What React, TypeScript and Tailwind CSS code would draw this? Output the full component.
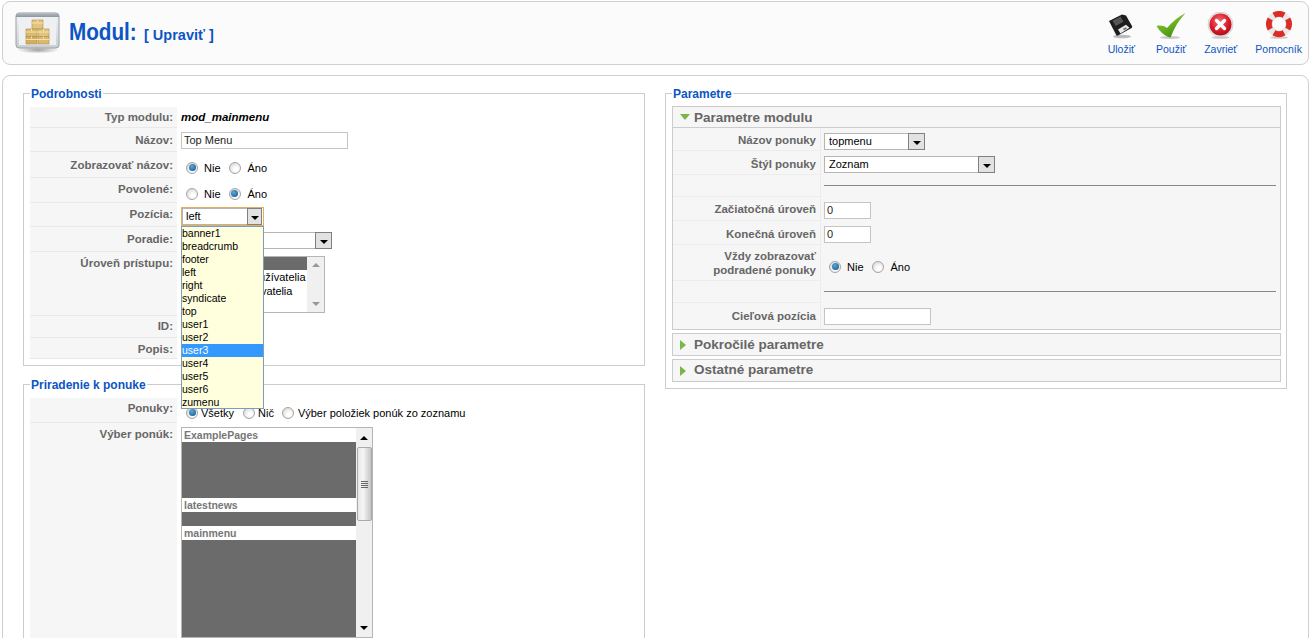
import type { ReactNode } from 'react';

const positions = ['banner1', 'breadcrumb', 'footer', 'left', 'right', 'syndicate', 'top', 'user1', 'user2', 'user3', 'user4', 'user5', 'user6', 'zumenu'];

const ModuleIcon = () => (
  <svg width="46" height="42" viewBox="0 0 46 42">
    <defs>
      <linearGradient id="win" x1="0" y1="0" x2="0" y2="1">
        <stop offset="0" stopColor="#f4f6f8" />
        <stop offset="1" stopColor="#c9ced3" />
      </linearGradient>
      <linearGradient id="winbar" x1="0" y1="0" x2="0" y2="1">
        <stop offset="0" stopColor="#b9bfc6" />
        <stop offset="1" stopColor="#8d949c" />
      </linearGradient>
      <radialGradient id="shade" cx="0.5" cy="0.5" r="0.5">
        <stop offset="0" stopColor="#777" stopOpacity="0.7" />
        <stop offset="1" stopColor="#777" stopOpacity="0" />
      </radialGradient>
    </defs>
    <ellipse cx="23" cy="38" rx="21" ry="3.5" fill="url(#shade)" />
    <rect x="1" y="1" width="43" height="35" rx="3" fill="url(#win)" stroke="#9aa0a6" />
    <path d="M1 4a3 3 0 0 1 3-3h37a3 3 0 0 1 3 3v1H1z" fill="url(#winbar)" />
    <rect x="4" y="7" width="37" height="26" fill="#eef0f2" />
    <g stroke="#b08d45" strokeWidth="0.6">
      <rect x="17" y="8" width="11" height="9" fill="#e2c47c" />
      <rect x="11" y="17" width="11" height="7.5" fill="#dcb96d" />
      <rect x="23" y="17" width="11" height="7.5" fill="#e2c47c" />
      <rect x="11" y="24.5" width="11" height="7.5" fill="#d4ae60" />
      <rect x="23" y="24.5" width="11" height="7.5" fill="#dcb96d" />
    </g>
    <path d="M17 11h11M11 20h23M11 27.5h23M22.5 8v2M16.5 17v2M28.5 17v2M16.5 24.5v2M28.5 24.5v2" stroke="#f3e3b3" strokeWidth="1" />
  </svg>
);

const SaveIcon = () => (
  <svg width="26" height="26" viewBox="0 0 26 26">
    <ellipse cx="14" cy="23.5" rx="9" ry="1.8" fill="#bbb" />
    <path d="M1 8 14 1.5l4 1 6 10.5c.4.8.2 1.4-.4 1.9L10 22.5c-.8.4-1.4.2-1.8-.4z" fill="#1d1d1d" />
    <path d="M4.5 7.8 12.5 3.6l3 5.2-7.8 4.2z" fill="#555" />
    <path d="m10 16.5 8-4.7 3.5 3-9 5.7z" fill="#e8e8e8" />
    <path d="m14.8 15.800 2.800-1.600 1.400 1.300-2.800 1.700z" fill="#777" />
  </svg>
);

const CheckIcon = () => (
  <svg width="30" height="26" viewBox="0 0 30 26">
    <defs>
      <linearGradient id="chk" x1="0" y1="0" x2="0.6" y2="1">
        <stop offset="0" stopColor="#a6dc3e" />
        <stop offset="1" stopColor="#3c8f10" />
      </linearGradient>
    </defs>
    <ellipse cx="14" cy="24.5" rx="10" ry="1.500" fill="#c9c9c9" />
    <path d="M0.500 13C4 12 7.500 12.500 11 15 16 9 22 4 29.500 0 23 7 18 15 14.500 24.500 9.500 23.500 4 19 0.500 13z" fill="url(#chk)" />
  </svg>
);

const CloseIcon = () => (
  <svg width="27" height="27" viewBox="0 0 27 27">
    <defs>
      <radialGradient id="red" cx="0.45" cy="0.35" r="0.7">
        <stop offset="0" stopColor="#f2737a" />
        <stop offset="0.6" stopColor="#dc1a28" />
        <stop offset="1" stopColor="#a80d18" />
      </radialGradient>
    </defs>
    <ellipse cx="13.500" cy="25.500" rx="9" ry="1.300" fill="#ccc" />
    <circle cx="13.500" cy="12.500" r="12.500" fill="#e6e6e6" stroke="#bbb" strokeWidth="0.500" />
    <circle cx="13.500" cy="12.500" r="11" fill="url(#red)" />
    <path d="m9.500 8.500 4 4 4-4M9.500 16.500l4-4 4 4" fill="none" stroke="#fff" strokeWidth="3.500" strokeLinecap="round" />
  </svg>
);

const HelpIcon = () => (
  <svg width="28" height="28" viewBox="0 0 28 28">
    <ellipse cx="14" cy="26.500" rx="9" ry="1.300" fill="#ccc" />
    <circle cx="14" cy="13" r="10" fill="none" stroke="#e8e8e8" strokeWidth="6" />
    <g fill="none" stroke="#dd2b25" strokeWidth="6">
      <path d="M9 4.400A10 10 0 0 1 19 4.400" />
      <path d="M9 21.700A10 10 0 0 0 19 21.700" />
      <path d="M5.400 8A10 10 0 0 0 5.400 18" />
      <path d="M22.600 8A10 10 0 0 1 22.600 18" />
    </g>
    <circle cx="14" cy="13" r="7" fill="#fbfbfb" stroke="#c9c9c9" strokeWidth="0.500" />
  </svg>
);

const Radio = ({ checked = false }: { checked?: boolean }) => (
  <span className="flex h-[12px] w-[12px] shrink-0 items-center justify-center rounded-full border border-[#a5a5a5] bg-[radial-gradient(circle_at_60%_65%,#ffffff_20%,#d4d4d4_90%)]">
    {checked && <span className="h-[7px] w-[7px] rounded-full bg-[radial-gradient(circle_at_40%_35%,#5aa9d8,#0d4f8a)]" />}
  </span>
);

const RadioGroup = ({ value }: { value: 'Nie' | 'Áno' }) => (
  <div className="flex items-center text-[11px] leading-[14px] text-black">
    <Radio checked={value === 'Nie'} />
    <span className="mt-px ml-[6px]">Nie</span>
    <span className="ml-[8px]"><Radio checked={value === 'Áno'} /></span>
    <span className="mt-px ml-[7px]">Áno</span>
  </div>
);

const ArrowBox = () => (
  <span className="-mr-px flex h-[17px] w-[17px] shrink-0 items-center justify-center border border-[#808080] bg-[#e2e2e2]">
    <span className="mt-[2px] h-0 w-0 border-x-[4px] border-t-[4px] border-x-transparent border-t-black" />
  </span>
);

const SelectBox = ({ text, className }: { text?: string; className: string }) => (
  <div className={`flex items-center justify-between border border-[#b5b5b5] bg-white pl-[4px] text-[11px] text-black ${className}`}>
    <span>{text}</span>
    <ArrowBox />
  </div>
);

const TextBox = ({ text, className }: { text?: string; className: string }) => (
  <div className={`flex items-center border border-[#c4c4c4] bg-white pl-[2px] text-[11px] text-[#222] ${className}`}>{text}</div>
);

const Row = ({ label, rowClass, labelClass, valueClass, children }: { label: string; rowClass: string; labelClass: string; valueClass?: string; children?: ReactNode }) => (
  <div className={`flex ${rowClass}`}>
    <div className={`w-[147px] shrink-0 border-b border-[#e9e9e9] bg-[#f6f6f6] pr-[4px] text-right text-[11.500px] leading-[14px] font-bold text-[#666] ${labelClass}`}>{label}</div>
    <div className={valueClass}>{children}</div>
  </div>
);

const ParamRow = ({ label, rowClass, labelClass, valueClass, children }: { label: ReactNode; rowClass: string; labelClass: string; valueClass?: string; children?: ReactNode }) => (
  <div className={`flex ${rowClass}`}>
    <div className={`w-[148px] shrink-0 border-r border-b border-[#ececec] pr-[4px] text-right text-[11.500px] leading-[14px] font-bold text-[#666] ${labelClass}`}>{label}</div>
    <div className={`grow pr-[4px] ${valueClass ?? ''}`}>{children}</div>
  </div>
);

const Legend = ({ children }: { children: string }) => (
  <legend className="px-[1px] text-[12px] leading-[14px] font-bold text-[#0b55c4]">
    <span className="relative top-px">{children}</span>
  </legend>
);

const ScrollUp = ({ gray = false }: { gray?: boolean }) => (
  <span className={`h-0 w-0 border-x-[4px] border-b-[4px] border-x-transparent ${gray ? 'border-b-[#999]' : 'border-b-black'}`} />
);

const ScrollDown = ({ gray = false }: { gray?: boolean }) => (
  <span className={`h-0 w-0 border-x-[4px] border-t-[4px] border-x-transparent ${gray ? 'border-t-[#999]' : 'border-t-black'}`} />
);

const ToolButton = ({ icon, label, className }: { icon: ReactNode; label: string; className?: string }) => (
  <div className={`flex flex-col items-center ${className ?? ''}`}>
    <div className="flex h-[28px] items-end">{icon}</div>
    <span className="mt-[3px] text-[10.500px] leading-[14px] text-[#0b55c4]">{label}</span>
  </div>
);

export default function App() {
  return (
    <div className="h-[638px] overflow-hidden bg-white font-['Liberation_Sans',Arial,sans-serif]">
      {/* Toolbar */}
      <div className="pt-px pr-[1px] pl-[2px]">
        <div className="flex h-[64px] items-center justify-between rounded-[8px] border border-[#cfcfcf] bg-[#fbfbfb] pr-[6px] pl-[12px]">
          <div className="flex items-center">
            <ModuleIcon />
            <h1 className="ml-[8px] flex items-baseline text-[24px] leading-[28px] font-bold text-[#0b55c4]">
              <span className="inline-block w-[75px] origin-left scale-x-[0.86] whitespace-nowrap">Modul:</span>
              <span className="text-[14.500px]">[ Upraviť ]</span>
            </h1>
          </div>
          <div className="flex items-start gap-[18px]">
            <ToolButton icon={<SaveIcon />} label="Uložiť" className="mr-[3px]" />
            <ToolButton icon={<CheckIcon />} label="Použiť" />
            <ToolButton icon={<CloseIcon />} label="Zavrieť" />
            <ToolButton icon={<HelpIcon />} label="Pomocník" />
          </div>
        </div>
      </div>

      {/* Main box */}
      <div className="mt-[10px] pr-[1px] pl-[2px]">
        <div className="flex h-[700px] gap-[20px] rounded-t-[8px] border border-[#cfcfcf] bg-white pt-[10px] pr-[20px] pl-[20px]">
          {/* Left column */}
          <div className="flex w-[622px] shrink-0 flex-col gap-[11px]">
            <fieldset className="h-[281px] border border-[#cccccc] px-[6px] pb-[6px]">
              <Legend>Podrobnosti</Legend>
              <div className="mt-[7px]">
                <Row label="Typ modulu:" rowClass="h-[21px]" labelClass="pt-[3px]" valueClass="pt-[3px] pl-[4px] text-[11.500px] leading-[14px] font-bold text-black italic">mod_mainmenu</Row>
                <Row label="Názov:" rowClass="h-[24px]" labelClass="pt-[5px]" valueClass="pt-[4px] pl-[4px]">
                  <TextBox text="Top Menu" className="h-[17px] w-[167px]" />
                </Row>
                <Row label="Zobrazovať názov:" rowClass="h-[26px]" labelClass="pt-[6px]" valueClass="pt-[8px] pl-[9px]">
                  <RadioGroup value="Nie" />
                </Row>
                <Row label="Povolené:" rowClass="h-[25px]" labelClass="pt-[4px]" valueClass="pt-[8px] pl-[9px]">
                  <RadioGroup value="Áno" />
                </Row>
                <Row label="Pozícia:" rowClass="h-[24px]" labelClass="pt-[4px]" valueClass="pt-[4px] pl-[4px]">
                  <div className="relative z-10">
                    <div className="flex h-[19px] w-[83px] items-center justify-between border border-[#e0b060] bg-white pr-[1px] text-[11px] text-black">
                      <span className="flex h-[17px] grow items-center border-y border-l border-[#b5b5b5] pl-[3px]">left</span>
                      <span className="flex h-[17px] w-[15px] shrink-0 items-center justify-center border border-[#808080] bg-[#e2e2e2]">
                        <span className="mt-[2px] h-0 w-0 border-x-[4px] border-t-[4px] border-x-transparent border-t-black" />
                      </span>
                    </div>
                    <ul className="absolute top-[19px] left-0 h-[183px] w-[83px] border border-[#7f9db9] bg-[#ffffdd] text-[10.500px] leading-[13px] text-black">
                      {positions.map((p) => (
                        <li key={p} className={`h-[13px] ${p === 'user3' ? 'bg-[#3399ff] text-white' : ''}`}>{p}</li>
                      ))}
                    </ul>
                  </div>
                </Row>
                <Row label="Poradie:" rowClass="h-[25px]" labelClass="pt-[5px]" valueClass="pt-[5px] pl-[4px]">
                  <SelectBox className="h-[17px] w-[151px]" />
                </Row>
                <Row label="Úroveň prístupu:" rowClass="h-[64px]" labelClass="pt-[4px]" valueClass="pt-[4px] pl-[4px]">
                  <div className="flex h-[57px] w-[144px] border border-[#b5b5b5] bg-white text-[11px] leading-[14px] text-black">
                    <div className="grow">
                      <div className="h-[13px] bg-[#6b6b6b] pl-[2px] text-white">Verejné</div>
                      <div className="whitespace-nowrap">Registrovaní používatelia</div>
                      <div className="tracking-[-0.1px] whitespace-nowrap">Špeciálni spravovatelia</div>
                    </div>
                    <div className="flex w-[17px] shrink-0 flex-col items-center justify-between bg-[#f0f0f0] py-[6px]">
                      <ScrollUp gray />
                      <ScrollDown gray />
                    </div>
                  </div>
                </Row>
                <Row label="ID:" rowClass="h-[22px]" labelClass="pt-[3px]" />
                <Row label="Popis:" rowClass="h-[21px]" labelClass="pt-[4px]" />
              </div>
            </fieldset>

            <fieldset className="h-[400px] border border-[#cccccc] px-[6px]">
              <Legend>Priradenie k ponuke</Legend>
              <div className="mt-[7px]">
                <Row label="Ponuky:" rowClass="h-[25px]" labelClass="pt-[3px]" valueClass="pt-[7px] pl-[9px]">
                  <div className="flex items-center text-[11px] leading-[14px] text-black">
                    <Radio checked />
                    <span className="mt-px ml-[3px]">Všetky</span>
                    <span className="ml-[9px]"><Radio /></span>
                    <span className="mt-px ml-[3px]">Nič</span>
                    <span className="ml-[8px]"><Radio /></span>
                    <span className="mt-px ml-[4px]">Výber položiek ponúk zo zoznamu</span>
                  </div>
                </Row>
                <Row label="Výber ponúk:" rowClass="h-[300px]" labelClass="pt-[4px]" valueClass="pt-[4px] pl-[4px]">
                  <div className="flex h-[211px] w-[192px] border border-[#b5b5b5] bg-white text-[10.500px] leading-[14px] font-bold text-[#777]">
                    <div className="flex grow flex-col">
                      <div className="h-[14px] pl-[2px]">ExamplePages</div>
                      <div className="h-[56px] bg-[#6b6b6b]" />
                      <div className="h-[14px] pl-[2px]">latestnews</div>
                      <div className="h-[14px] bg-[#6b6b6b]" />
                      <div className="h-[14px] pl-[2px]">mainmenu</div>
                      <div className="grow bg-[#6b6b6b]" />
                    </div>
                    <div className="flex w-[16px] shrink-0 flex-col items-center bg-[#f0f0f0]">
                      <div className="flex h-[19px] items-center"><ScrollUp /></div>
                      <div className="flex h-[74px] w-[15px] flex-col items-center justify-center gap-[1px] rounded-[2px] border border-[#aaa] bg-[linear-gradient(to_right,#e8e8e8,#f6f6f6_40%,#c4c4c8)]">
                        <span className="h-px w-[7px] bg-[#666]" />
                        <span className="h-px w-[7px] bg-[#666]" />
                        <span className="h-px w-[7px] bg-[#666]" />
                        <span className="h-px w-[7px] bg-[#666]" />
                      </div>
                      <div className="mb-[7px] flex grow items-end"><ScrollDown /></div>
                    </div>
                  </div>
                </Row>
              </div>
            </fieldset>
          </div>

          {/* Right column */}
          <div className="w-[622px] shrink-0">
            <fieldset className="h-[303px] border border-[#cccccc] pr-[5px] pl-[6px]">
              <Legend>Parametre</Legend>
              <div className="mt-[6px] flex flex-col gap-[3px]">
                <div className="border border-[#cccccc] bg-[#f6f6f6]">
                  <div className="flex h-[21px] items-center border-b border-[#cccccc]">
                    <span className="ml-[7px] h-0 w-0 border-x-[5px] border-t-[6px] border-x-transparent border-t-[#7ab648]" />
                    <span className="mt-[2px] ml-[4px] text-[13.500px] font-bold text-[#666]">Parametre modulu</span>
                  </div>
                  <ParamRow label="Názov ponuky" rowClass="h-[23px]" labelClass="pt-[5px]" valueClass="pt-[5px] pl-[3px]">
                    <SelectBox text="topmenu" className="h-[17px] w-[101px]" />
                  </ParamRow>
                  <ParamRow label="Štýl ponuky" rowClass="h-[24px]" labelClass="pt-[6px]" valueClass="pt-[5px] pl-[3px]">
                    <SelectBox text="Zoznam" className="h-[17px] w-[171px]" />
                  </ParamRow>
                  <ParamRow label="" rowClass="h-[22px]" labelClass="" valueClass="pt-[10px] pl-[3px]">
                    <div className="h-px bg-[#888]" />
                  </ParamRow>
                  <ParamRow label="Začiatočná úroveň" rowClass="h-[24px]" labelClass="pt-[5px]" valueClass="pt-[5px] pl-[3px]">
                    <TextBox text="0" className="h-[17px] w-[47px]" />
                  </ParamRow>
                  <ParamRow label="Konečná úroveň" rowClass="h-[24px]" labelClass="pt-[6px]" valueClass="pt-[5px] pl-[3px]">
                    <TextBox text="0" className="h-[17px] w-[47px]" />
                  </ParamRow>
                  <ParamRow label={<>Vždy zobrazovať<br />podradené ponuky</>} rowClass="h-[36px]" labelClass="pt-[4px]" valueClass="pt-[14px] pl-[8px]">
                    <RadioGroup value="Nie" />
                  </ParamRow>
                  <ParamRow label="" rowClass="h-[22px]" labelClass="" valueClass="pt-[10px] pl-[3px]">
                    <div className="h-px bg-[#888]" />
                  </ParamRow>
                  <div className="flex h-[26px]">
                    <div className="w-[148px] shrink-0 border-r border-[#ececec] pt-[6px] pr-[4px] text-right text-[11.500px] leading-[14px] font-bold text-[#666]">Cieľová pozícia</div>
                    <div className="pt-[5px] pl-[3px]">
                      <TextBox className="h-[17px] w-[107px]" />
                    </div>
                  </div>
                </div>
                <div className="flex h-[23px] items-center border border-[#cccccc] bg-[#f6f6f6]">
                  <span className="ml-[7px] h-0 w-0 border-y-[5px] border-l-[6px] border-y-transparent border-l-[#7ab648]" />
                  <span className="mt-px ml-[8px] text-[13.500px] font-bold text-[#666]">Pokročilé parametre</span>
                </div>
                <div className="flex h-[23px] items-center border border-[#cccccc] bg-[#f6f6f6]">
                  <span className="ml-[7px] h-0 w-0 border-y-[5px] border-l-[6px] border-y-transparent border-l-[#7ab648]" />
                  <span className="ml-[8px] text-[13.500px] font-bold text-[#666]">Ostatné parametre</span>
                </div>
              </div>
            </fieldset>
          </div>
        </div>
      </div>
    </div>
  );
}
